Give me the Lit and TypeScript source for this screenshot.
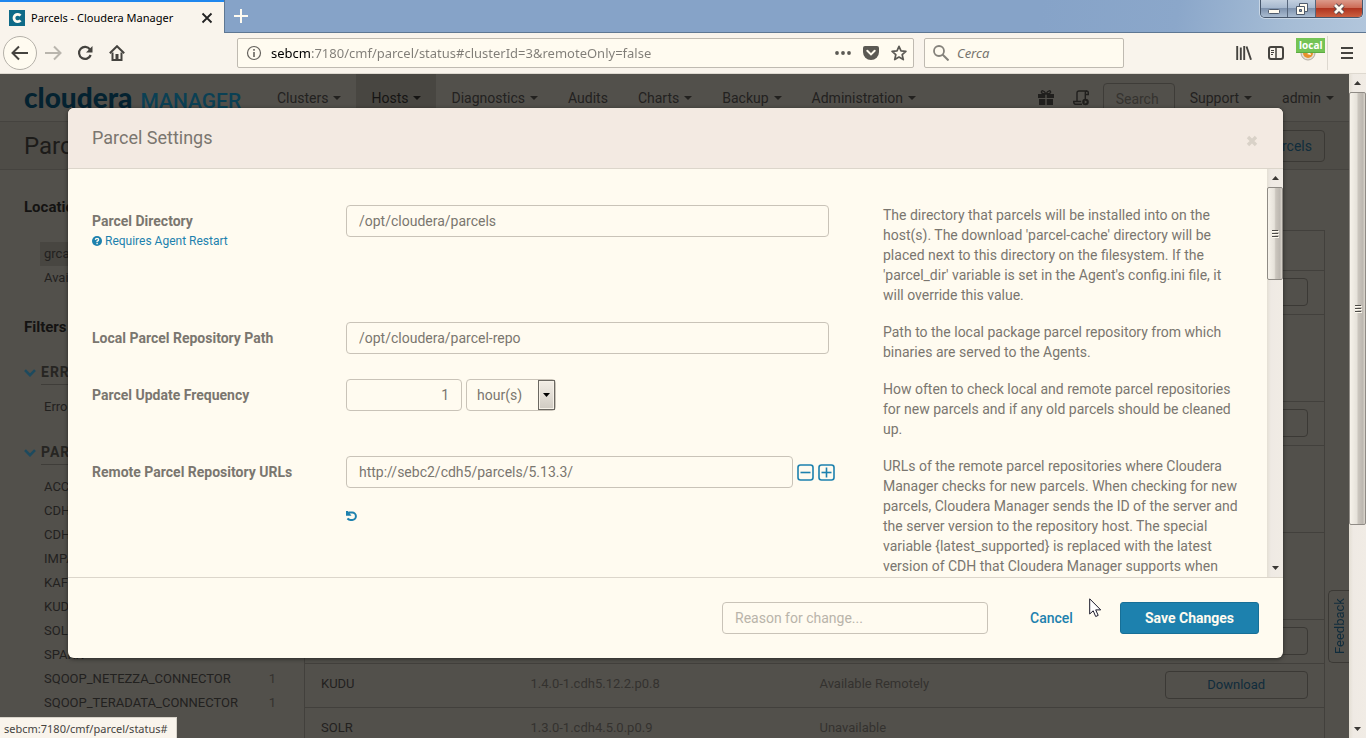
import { LitElement, html, svg, css, nothing } from "lit";
import { customElement, property } from "lit/decorators.js";

interface ParcelRow {
  name?: string;
  version?: string;
  status?: string;
  action?: boolean;
  tall?: boolean;
}

const NAV = [
  { label: "Clusters", menu: true },
  { label: "Hosts", menu: true, active: true },
  { label: "Diagnostics", menu: true },
  { label: "Audits" },
  { label: "Charts", menu: true },
  { label: "Backup", menu: true },
  { label: "Administration", menu: true },
];

const PARCELS: { name: string; count?: number }[] = [
  { name: "ACCUMULO" },
  { name: "CDH 4" },
  { name: "CDH 5" },
  { name: "IMPALA" },
  { name: "KAFKA" },
  { name: "KUDU" },
  { name: "SOLR" },
  { name: "SPARK" },
  { name: "SQOOP_NETEZZA_CONNECTOR", count: 1 },
  { name: "SQOOP_TERADATA_CONNECTOR", count: 1 },
];

const ROWS: ParcelRow[] = [
  { action: true },
  { tall: true },
  { action: true },
  { tall: true },
  { tall: true },
  { action: true },
  { name: "KUDU", version: "1.4.0-1.cdh5.12.2.p0.8", status: "Available Remotely", action: true },
  { name: "SOLR", version: "1.3.0-1.cdh4.5.0.p0.9", status: "Unavailable" },
];

const base = css`
  *, *::before, *::after { box-sizing: border-box; }
  button, input, select { font: inherit; color: inherit; margin: 0; padding: 0; border: 0; background: none; }
  a { color: inherit; text-decoration: none; }
  svg { display: block; flex: none; }
`;

@customElement("scroll-bar")
export class ScrollBar extends LitElement {
  @property({ type: Number }) size = 50;

  static styles = [base, css`
    :host {
      display: flex; flex-direction: column; flex: none; width: 16px; box-sizing: border-box;
      background: linear-gradient(90deg, #e4dfd4, #efeae4 25%, #f1ece5);
    }
    .arrow { height: 18px; flex: none; display: flex; align-items: center; justify-content: center; }
    .track { flex: 1; min-height: 0; }
    .thumb {
      border: 1px solid #8f8b85; border-radius: 2px;
      background: linear-gradient(90deg, #f6f2ea, #e6e2da 45%, #cbc6be 55%, #bcb7b0 85%, #dcd7ce);
      display: flex; align-items: center; justify-content: center;
    }
  `];

  render() {
    return html`
      <div class="arrow"><svg width="7" height="4"><path d="M0 4L3.5 0L7 4z" fill="#3a3835" /></svg></div>
      <div class="track">
        <div class="thumb" style="height:${this.size}%">
          <svg width="8" height="9"><path d="M1 1.5h6M1 4.5h6M1 7.500h6" stroke="#4c4a46" /><path d="M1 2.500h7M1 5.500h7M1 8.500h7" stroke="#fffbf0" /></svg>
        </div>
      </div>
      <div class="arrow"><svg width="7" height="4"><path d="M0 0L3.5 4L7 0z" fill="#3a3835" /></svg></div>
    `;
  }
}

@customElement("browser-chrome")
export class BrowserChrome extends LitElement {
  static styles = [base, css`
    :host { display: block; font: 13px/20px "Noto Sans", sans-serif; color: #000; }
    .strip {
      display: flex; height: 33px; border-bottom: 1px solid #5e7793;
      background: linear-gradient(100deg, #86a3c8 76%, #8ba7ca 86%, #a5bcd5 94%, #b2c6dc);
    }
    .tab {
      width: 225px; height: 33px; padding: 2px 11px 0 9px; display: flex; align-items: center; gap: 6px;
      background: #f9f4ec; border-right: 1px solid #5e7793; box-shadow: inset 0 2px #1f87ee;
      font-size: 11px;
    }
    .tab span { flex: 1; white-space: nowrap; }
    .plus { width: 32px; height: 32px; display: grid; place-items: center; }
    .window { margin-left: auto; margin-right: 3px; width: 103px; height: 18px; display: flex;
      border: 1px solid #46566b; border-top: 0; border-radius: 0 0 5px 5px; overflow: hidden; box-shadow: 0 0 0 1px #c8d6e5; }
    .window button { width: 28px; display: grid; place-items: center; border-right: 1px solid #56667b;
      background: linear-gradient(#c3d0df, #a7b9cf 45%, #7f93ae 50%, #a9bbd0); }
    .window .shut { width: 47px; border: 0; background: linear-gradient(#dc9a8a, #cd6c57 45%, #b03520 50%, #cc6040); }
    .bar { display: flex; align-items: center; height: 41px; background: #f9f4ec; border-bottom: 1px solid #ded9d0; padding: 0 0 0 3px; }
    .bar button { display: grid; place-items: center; height: 34px; width: 32px; flex: none; }
    .bar .back { width: 34px; border: 1px solid #b5b1a9; border-radius: 50%; background: #fffbf0; }
    .box { display: flex; align-items: center; height: 30px; border: 1px solid #bfbab1; border-radius: 2px; background: #fffbf0; min-width: 0; }
    .address { margin-left: 104px; flex: 1; padding: 0 0 0 8px; }
    .box input { outline: 0; min-width: 0; flex: 1; height: 28px; }
    .box .url { margin-left: 9px; color: transparent; background: linear-gradient(90deg, #000 40px, #807d77 40px); -webkit-background-clip: text; background-clip: text; }
    .bar .address button { width: 28px; height: 28px; }
    .search { margin-left: 10px; flex: 0 0 200px; padding: 0 8px; gap: 8px; }
    .search input::placeholder { color: #77746e; opacity: 1; font-style: italic; }
    .tools { display: flex; margin-left: 104px; align-items: center; }
    .local { position: relative; }
    .badge { position: absolute; left: 4px; top: 2px; padding: 0 3px; height: 15px; background: #74c455; border-bottom: 1px solid #5daa42;
      color: #fff; font: 700 10px/14px "Open Sans", sans-serif; }
    .bar .menu { border-left: 1px solid #ddd8cf; width: 39px; margin-left: 3px; }
  `];

  render() {
    return html`
      <div class="strip">
        <div class="tab">
          <svg width="16" height="16"><path fill="#0f6b88" d="M0 0h16v16H0z" /><path d="M11.500 5.600A3.700 3.700 0 1 0 11.500 10.400" fill="none" stroke="#fffbf0" stroke-width="2.800" /></svg>
          <span>Parcels - Cloudera Manager</span>
          <svg width="12" height="12"><path d="M1.500 1.500l9 9M10.500 1.500l-9 9" stroke="#222" stroke-width="1.800" /></svg>
        </div>
        <button class="plus" aria-label="New tab"><svg width="14" height="14"><path d="M7 0v14M0 7h14" stroke="#fffbf0" stroke-width="2" /></svg></button>
        <div class="window">
          <button aria-label="Minimize"><svg width="14" height="12"><rect x="1.500" y="6.500" width="11" height="4" rx="1" fill="#fffbf0" stroke="#4f5b6c" /></svg></button>
          <button aria-label="Restore"><svg width="14" height="12"><path d="M4.500.5h8v8h-8z" fill="#fffbf0" stroke="#4f5b6c" /><path d="M1.500 3.500h8v8h-8z" fill="#fffbf0" stroke="#4f5b6c" /><path d="M4.500 6.500h2v2h-2z" fill="#8796ab" stroke="#4f5b6c" /></svg></button>
          <button class="shut" aria-label="Close"><svg width="14" height="12"><path d="M3 2l8 8M11 2l-8 8" stroke="#5c4a50" stroke-width="4.600" /><path d="M3 2l8 8M11 2l-8 8" stroke="#fffbf0" stroke-width="2.800" /></svg></button>
        </div>
      </div>
      <div class="bar">
        <button class="back" aria-label="Back"><svg width="18" height="16"><path d="M17 8H2M8 1.500L1.500 8L8 14.500" fill="none" stroke="#45433f" stroke-width="2" /></svg></button>
        <button aria-label="Forward"><svg width="18" height="16"><path d="M1 8h15M10 1.500L16.500 8L10 14.500" fill="none" stroke="#b9b5ad" stroke-width="2" /></svg></button>
        <button aria-label="Reload"><svg width="16" height="16"><path d="M13 4.500A6 6 0 1 0 13.700 10" fill="none" stroke="#45433f" stroke-width="2.200" /><path d="M15.500 1v6.500H9z" fill="#45433f" /></svg></button>
        <button aria-label="Home"><svg width="16" height="16"><path d="M.8 8.200L8 1.200L15.200 8.200" fill="none" stroke="#45433f" stroke-width="2" /><path d="M3.500 7.500V15h9V7.500" fill="none" stroke="#45433f" stroke-width="2" /><path d="M6.500 9h3v6h-3z" fill="#45433f" /></svg></button>
        <div class="box address">
          <svg width="16" height="16"><circle cx="8" cy="8" r="6.500" fill="none" stroke="#66635e" stroke-width="1.200" /><path d="M8 7v5M8 4v1.800" stroke="#66635e" stroke-width="1.600" /></svg>
          <input class="url" type="text" aria-label="Address" value="sebcm:7180/cmf/parcel/status#clusterId=3&amp;remoteOnly=false" />
          <button aria-label="Page actions"><svg width="16" height="4"><circle cx="2" cy="2" r="1.900" fill="#5b5954" /><circle cx="8" cy="2" r="1.900" fill="#5b5954" /><circle cx="14" cy="2" r="1.900" fill="#5b5954" /></svg></button>
          <button aria-label="Save to Pocket"><svg width="16" height="14"><path d="M2 0h12a2 2 0 0 1 2 2v4a8 8 0 0 1-16 0V2a2 2 0 0 1 2-2z" fill="#5b5954" /><path d="M4.300 4.800L8 8.400L11.700 4.800" fill="none" stroke="#fffbf0" stroke-width="2" stroke-linecap="round" /></svg></button>
          <button aria-label="Bookmark"><svg width="16" height="16"><path d="M8 1.400l2 4.500 4.900.5-3.700 3.300 1.100 4.900L8 12.100l-4.300 2.500 1.100-4.900L1.100 6.400 6 5.900z" fill="none" stroke="#5b5954" stroke-width="1.700" stroke-linejoin="round" /></svg></button>
        </div>
        <div class="box search">
          <svg width="16" height="16"><circle cx="6" cy="6" r="5" fill="none" stroke="#85827b" stroke-width="1.800" /><path d="M9.500 9.500L15.500 15.500" stroke="#85827b" stroke-width="2" /></svg>
          <input type="text" aria-label="Cerca" placeholder="Cerca" />
        </div>
        <div class="tools">
          <button aria-label="Library"><svg width="16" height="14"><path d="M1.200 0v14M4.800 1.500V14M8.200 0v14M10.500.5L15 13.700" fill="none" stroke="#45433f" stroke-width="1.900" /></svg></button>
          <button aria-label="Sidebars"><svg width="16" height="14"><rect x="1" y="1" width="14" height="12" rx="2" fill="none" stroke="#45433f" stroke-width="2" /><path d="M8 1v12" stroke="#45433f" stroke-width="1.500" /><path d="M3 4.500h3M3 6.500h3M3 8.500h2" stroke="#45433f" /></svg></button>
          <button class="local" aria-label="local">
            <svg width="18" height="16"><circle cx="9" cy="8" r="7" fill="#e7dfd0" stroke="#b1aaa0" /><path d="M4 8a5 5 0 0 0 10 0z" fill="#e8912c" /><path d="M8 9l3-2 1 3z" fill="#fffbf0" /></svg>
            <span class="badge">local</span>
          </button>
          <button class="menu" aria-label="Menu"><svg width="12" height="12"><path d="M0 1h12M0 6h12M0 11h12" stroke="#45433f" stroke-width="2" /></svg></button>
        </div>
      </div>
    `;
  }
}

@customElement("manager-page")
export class ManagerPage extends LitElement {
  static styles = [base, css`
    :host { display: block; font: 13px/24px Roboto, sans-serif; color: #22211f; background: #52504b; overflow: hidden; }
    .nav { display: flex; align-items: flex-start; height: 48px; border-bottom: 1px solid #45433f; font-size: 14px; padding-left: 24px; }
    .logo { display: flex; align-items: baseline; gap: 8px; width: 238px; line-height: 46px; }
    .logo b { font-family: Lato, sans-serif; font-size: 28px; font-weight: 900; color: #042230; }
    .logo span { font-size: 21px; font-weight: 500; color: #0b4054; }
    .nav a { display: flex; align-items: center; gap: 5px; height: 48px; padding: 0 15px; }
    .nav a.active { background: #484641; color: #151413; }
    .caret { border: 4px solid transparent; border-top-color: currentColor; border-bottom: 0; }
    .right { margin-left: auto; display: flex; align-items: center; }
    .right button { width: 35px; display: grid; place-items: center; }
    .find { height: 32px; width: 72px; margin: 2px 0 0 4px; border: 1px solid #3e3c38; border-radius: 4px; display: flex; align-items: center; }
    .find input { width: 100%; padding-left: 12px; outline: 0; }
    .find input::placeholder { color: #35332f; opacity: 1; }
    .head { display: flex; align-items: center; justify-content: space-between; height: 48px; padding: 0 24px; border-bottom: 1px solid #45433f; background: #4e4c47; }
    h1 { margin: 0; font-size: 24px; font-weight: 400; color: #1c1b19; }
    .outline { height: 32px; padding: 0 12px; border: 1px solid #3b3935; border-radius: 4px; color: #102c3c; font-size: 14px; }
    .body { display: flex; align-items: flex-start; }
    .side { width: 304px; padding: 25px 24px 0; }
    h2 { margin: 0 0 23px; font-size: 15px; line-height: 24px; font-weight: 700; color: #141312; }
    ul { list-style: none; margin: 0 0 0 16px; padding: 0; }
    li { display: flex; justify-content: space-between; padding: 0 4px; }
    li.on { background: #484641; }
    li span { color: #34322f; }
    .filters { margin: 25px 0 21px; }
    .group { display: flex; align-items: center; gap: 5px; }
    .group + ul { padding-top: 10px; }
    .group ~ .group { margin-top: 21px; }
    h3 { flex: 1; margin: 0; font-size: 14px; line-height: 24px; letter-spacing: 1px; text-transform: uppercase; color: #262522; border-bottom: 1px solid #3f3d39; }
    .main { flex: 1; padding: 60px 24px 0 0; }
    table { width: 100%; border-collapse: collapse; table-layout: fixed; border: 1px solid #42403c; }
    th, td { height: 44px; padding: 0 16px 3px; border-bottom: 1px solid #42403c; text-align: left; font-weight: 400; }
    th { height: 40px; }
    td:last-child { padding-bottom: 1px; }
    .tall td { height: 87px; }
    .c1 { width: 210px; } .c2 { width: 289px; } .c4 { width: 176px; }
    .muted { color: #34322f; }
    .get { display: block; width: 100%; height: 28px; border: 1px solid #3b3935; border-radius: 4px; color: #102c3c; }
  `];

  render() {
    return html`
      <nav class="nav">
        <div class="logo"><b>cloudera</b><span>MANAGER</span></div>
        ${NAV.map((n) => html`<a href="#" class=${n.active ? "active" : ""}>${n.label}${n.menu ? html`<i class="caret"></i>` : nothing}</a>`)}
        <div class="right">
          <button aria-label="Parcels"><svg width="16" height="16" fill="#201f1d"><path d="M0 4h7.300v4H0zM8.700 4H16v4H8.700zM1 9h6.300v6H1zM8.700 9H15v6H8.700z" /><path d="M8 4C6 0 3 0 3.500 2.500C4 4 6 4 8 4C10 4 12 4 12.500 2.500C13 0 10 0 8 4" fill="none" stroke="#201f1d" stroke-width="1.400" /></svg></button>
          <button aria-label="Running commands"><svg width="16" height="16" fill="none" stroke="#201f1d" stroke-width="1.400"><path d="M4 11V3Q4 1 6 1h7.500Q15.300 1 15.300 3v1.500h-3V9M12.300 4.500V3Q12.300 1 14 1M9 14.300H2.500Q.7 14.300.7 11.500h7.500" /><circle cx="12.500" cy="12" r="2.600" fill="#201f1d" /><path d="M11.700 10.300v3.400l2.500-1.700z" fill="#52504b" stroke="none" /></svg></button>
          <label class="find"><input type="text" placeholder="Search" aria-label="Search" /></label>
          <a href="#">Support<i class="caret"></i></a>
          <a href="#">admin<i class="caret"></i></a>
        </div>
      </nav>
      <header class="head">
        <h1>Parcels</h1>
        <button class="outline">Check for New Parcels</button>
      </header>
      <div class="body">
        <aside class="side">
          <h2>Location</h2>
          <ul><li class="on"><a href="#">grca</a></li><li><a href="#">Available</a></li></ul>
          <h2 class="filters">Filters</h2>
          ${this.heading("Errors")}
          <ul><li><a href="#">Error</a></li></ul>
          ${this.heading("Parcel")}
          <ul>${PARCELS.map((p) => html`<li><a href="#">${p.name}</a>${p.count ? html`<span>${p.count}</span>` : nothing}</li>`)}</ul>
        </aside>
        <main class="main">
          <table aria-label="Parcels">
            <thead><tr><th class="c1"></th><th class="c2"></th><th></th><th class="c4"></th></tr></thead>
            <tbody>
              ${ROWS.map((r) => html`<tr class=${r.tall ? "tall" : ""}>
                <td>${r.name}</td><td class="muted">${r.version}</td><td class="muted">${r.status}</td>
                <td>${r.action ? html`<button class="get" aria-label="Download">${r.name ? "Download" : nothing}</button>` : nothing}</td>
              </tr>`)}
            </tbody>
          </table>
        </main>
      </div>
    `;
  }

  private heading(text: string) {
    return html`<div class="group">
      <svg width="12" height="8"><path d="M1 1.200L6 6.200L11 1.200" fill="none" stroke="#1d4a5e" stroke-width="2.600" /></svg>
      <h3>${text}</h3>
    </div>`;
  }
}

@customElement("parcel-settings")
export class ParcelSettings extends LitElement {
  static styles = [base, css`
    :host { display: flex; flex-direction: column; font: 14px/20px Roboto, sans-serif; color: #7a766f; background: #fffbf0;
      border-radius: 6px; overflow: hidden; box-shadow: 0 1px 4px rgba(0, 0, 0, 0.5); }
    header { display: flex; align-items: center; justify-content: space-between; height: 61px; padding: 0 25px 0 24px;
      background: #f3eae2; border-bottom: 1px solid #dcd6cb; }
    h2 { margin: 0; font-size: 18px; font-weight: 400; }
    header button { margin-top: 6px; }
    .scroll { flex: 1; min-height: 0; display: flex; }
    form { flex: 1; overflow: hidden; padding: 36px 24px 0; display: flex; flex-direction: column; gap: 17px; }
    .row { display: grid; grid-template-columns: 230px minmax(0, 1fr) 360px; column-gap: 24px; }
    .name { padding-top: 6px; }
    .name label { display: block; font-weight: 700; }
    .name a { display: flex; align-items: center; gap: 3px; font-size: 12px; color: #1d81ae; }
    p { margin: 0; }
    .line { display: flex; gap: 4px; align-items: center; padding-right: 30px; }
    .wide { padding-right: 24px; }
    .text { flex: 1; min-width: 0; height: 32px; padding: 0 12px; border: 1px solid #c9c3b8; border-radius: 4px; background: #fffbf0; outline: 0; }
    .number { flex: none; width: 116px; text-align: right; }
    .pick { display: flex; position: relative; width: 90px; height: 32px; }
    select { appearance: none; width: 100%; border: 1px solid #c9c3b8; border-radius: 4px; padding: 0 10px; background: #fffbf0; outline: 0; }
    .drop { position: absolute; right: 1px; top: 1px; width: 17px; height: 30px; border: 1px solid #6b6862; background: linear-gradient(#f2ede5, #e2ddd5 50%, #cfcac2); box-shadow: inset 0 0 0 1px #f6f1e8;
      display: grid; place-items: center; pointer-events: none; }
    .icon { width: 17px; height: 17px; }
    .undo { display: block; margin-top: 22px; }
    footer { display: flex; align-items: center; justify-content: flex-end; height: 81px; padding: 0 24px; border-top: 1px solid #dcd6cb; }
    footer .text { flex: 0 0 266px; }
    .text::placeholder { color: #b9b4aa; opacity: 1; }
    .cancel { width: 132px; font-weight: 500; text-align: center; color: #1d81ae; height: 32px; padding: 0 5px 0 0; }
    .save { width: 139px; height: 32px; border: 1px solid #176f97; border-radius: 3px; background: #1d81ae; color: #fffbf0; font-weight: 700; }
  `];

  render() {
    return html`
      <header>
        <h2>Parcel Settings</h2>
        <button aria-label="Close"><svg width="12" height="12"><path d="M2 2l8 8M10 2l-8 8" stroke="#d9d2c8" stroke-width="3.400" /></svg></button>
      </header>
      <div class="scroll">
        <form>
          <div class="row">
            <div class="name">
              <label for="dir">Parcel Directory</label>
              <a href="#"><svg width="10" height="10"><circle cx="5" cy="5" r="5" fill="#1d81ae" /><path d="M3.400 3.900Q3.500 2.400 5 2.400Q6.600 2.400 6.600 3.700Q6.600 4.600 5.100 5.300V6M5.100 6.800v1.400" fill="none" stroke="#fffbf0" stroke-width="1.400" /></svg>Requires Agent Restart</a>
            </div>
            <div><div class="line"><input class="text" id="dir" value="/opt/cloudera/parcels" /></div></div>
            <p>The directory that parcels will be installed into on the host(s). The download 'parcel-cache' directory will be placed next to this directory on the filesystem. If the 'parcel_dir' variable is set in the Agent's config.ini file, it will override this value.</p>
          </div>
          <div class="row">
            <div class="name"><label for="repo">Local Parcel Repository Path</label></div>
            <div><div class="line"><input class="text" id="repo" value="/opt/cloudera/parcel-repo" /></div></div>
            <p>Path to the local package parcel repository from which binaries are served to the Agents.</p>
          </div>
          <div class="row">
            <div class="name"><label for="freq">Parcel Update Frequency</label></div>
            <div><div class="line">
              <input class="text number" id="freq" value="1" />
              <div class="pick">
                <select aria-label="Unit"><option>hour(s)</option></select>
                <span class="drop"><svg width="7" height="4"><path d="M0 0L3.500 4L7 0z" fill="#000" /></svg></span>
              </div>
            </div></div>
            <p>How often to check local and remote parcel repositories for new parcels and if any old parcels should be cleaned up.</p>
          </div>
          <div class="row">
            <div class="name"><label for="urls">Remote Parcel Repository URLs</label></div>
            <div>
              <div class="line wide">
                <input class="text" id="urls" value="http://sebc2/cdh5/parcels/5.13.3/" />
                <button type="button" class="icon" aria-label="Remove">${this.square(false)}</button>
                <button type="button" class="icon" aria-label="Add">${this.square(true)}</button>
              </div>
              <button type="button" class="undo" aria-label="Reset"><svg width="12" height="12"><path d="M3 2.500H6.200A3.700 3.700 0 0 1 6.200 9.900H4.500Q2.800 9.900 1.400 8.600" fill="none" stroke="#1d81ae" stroke-width="2" /><path d="M0 1h2l3.500 4.800H0z" fill="#1d81ae" /></svg></button>
            </div>
            <p>URLs of the remote parcel repositories where Cloudera Manager checks for new parcels. When checking for new parcels, Cloudera Manager sends the ID of the server and the server version to the repository host. The special variable {latest_supported} is replaced with the latest version of CDH that Cloudera Manager supports when</p>
          </div>
        </form>
        <scroll-bar size="25"></scroll-bar>
      </div>
      <footer>
        <input class="text" placeholder="Reason for change..." aria-label="Reason for change" />
        <button class="cancel">Cancel</button>
        <button class="save">Save Changes</button>
      </footer>
    `;
  }

  private square(plus: boolean) {
    return html`<svg width="17" height="17" fill="none" stroke="#1d81ae" stroke-width="1.600">
      <rect x="1" y="1" width="15" height="15" rx="2.500" /><path d="M3.500 8.500h10" />${plus ? svg`<path d="M8.500 3.500v10" />` : nothing}
    </svg>`;
  }
}

@customElement("app-root")
export class AppRoot extends LitElement {
  static styles = [base, css`
    :host { display: flex; flex-direction: column; height: 100vh; overflow: hidden; }
    .view { flex: 1; min-height: 0; display: flex; }
    .content { flex: 1; min-width: 0; position: relative; overflow: hidden; }
    manager-page { height: 100%; }
    .overlay { position: absolute; inset: 0; padding: 34px 66px 80px 68px; display: flex; }
    parcel-settings { flex: 1; min-width: 0; }
    .outer { width: 17px; }
    .feedback { position: absolute; right: 0; bottom: 75px; width: 21px; height: 73px; border: 1px solid #3b3935; border-left: 0; border-radius: 0 5px 5px 0;
      font: 13px/19px Roboto, sans-serif; color: #102c3c; writing-mode: vertical-rl; transform: rotate(180deg); text-align: center; }
    .status { position: absolute; left: 0; bottom: 0; height: 21px; padding: 0 8px 0 4px; border: 1px solid #d8d3ca; border-width: 1px 1px 0 0; background: #f9f4ec;
      color: #45433f; font: 11px/21px "Noto Sans", sans-serif; }
    .pointer { position: absolute; left: 1089px; top: 524px; }
  `];

  render() {
    return html`
      <browser-chrome></browser-chrome>
      <div class="view">
        <div class="content">
          <manager-page></manager-page>
          <button class="feedback">Feedback</button>
          <div class="overlay"><parcel-settings role="dialog" aria-label="Parcel Settings"></parcel-settings></div>
          <div class="status">sebcm:7180/cmf/parcel/status#</div>
          <svg class="pointer" width="13" height="20"><path d="M.7.8V16L4.200 12.800L6.700 18.500L9.200 17.400L6.700 11.900H11.700z" fill="#fff" stroke="#1b1a2b" /></svg>
        </div>
        <scroll-bar class="outer" size="69"></scroll-bar>
      </div>
    `;
  }
}
